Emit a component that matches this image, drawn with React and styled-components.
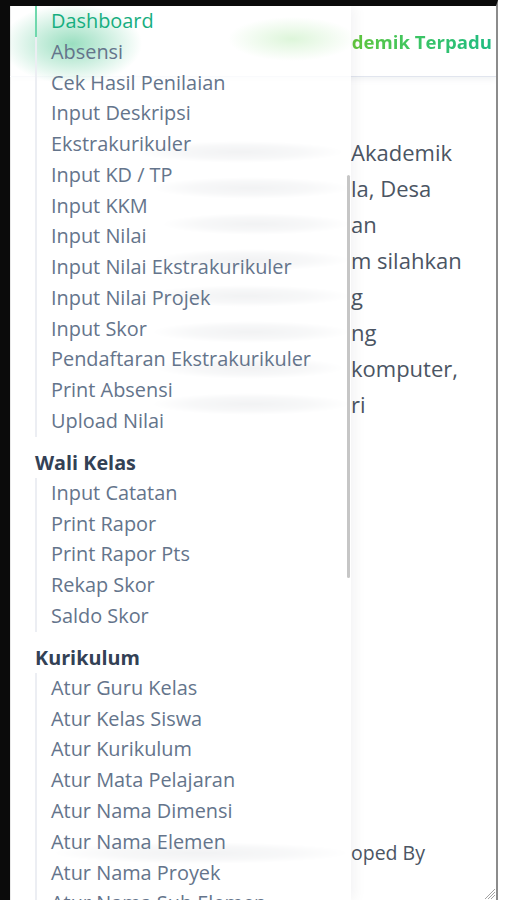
import styled, { createGlobalStyle } from 'styled-components';

const GlobalStyle = createGlobalStyle`
  html, body {
    margin: 0;
    padding: 0;
    background: #fff;
  }
  body {
    font-family: "Open Sans", "Noto Sans", sans-serif;
  }
`;

const Frame = styled.div`
  width: 506px;
  height: 900px;
  box-sizing: border-box;
  padding-right: 8px;
  background: #fff;
  overflow: hidden;
`;

const Device = styled.div`
  position: relative;
  height: 100%;
  box-sizing: border-box;
  border-top: 6px solid #0b0b0b;
  border-left: 10px solid #0b0b0b;
  border-right: 2px solid #8c8c8c;
  box-shadow: inset 1px 0 0 #8f8f8f;
  background: #fff;
  overflow: hidden;
`;

const Page = styled.div`
  display: flex;
  flex-direction: column;
  height: 100%;
`;

const Header = styled.header`
  height: 70px;
  flex: 0 0 70px;
  display: flex;
  align-items: center;
  justify-content: flex-end;
  padding: 0 4px 0 40px;
  border-bottom: 1px solid #e1e5ee;
  box-shadow: 0 2px 6px rgba(100, 116, 139, 0.1);
`;

const Title = styled.h1`
  margin: 0;
  font-size: 18.6px;
  font-weight: 700;
  white-space: nowrap;
  background: linear-gradient(90deg, #62c63c 0%, #3cc563 45%, #1fbb82 100%);
  -webkit-background-clip: text;
  background-clip: text;
  color: transparent;
`;

const Content = styled.main`
  padding: 57px 0 0 24px;
`;

const Line = styled.div`
  display: flex;
  align-items: center;
  font-size: ${({ $small }) => ($small ? '19.5px' : '22px')};
  line-height: 36px;
  color: #4b5563;
  white-space: nowrap;
`;

/* the part of each line covered by the drawer: only a blurred smear of it shows */
const Lead = styled.span`
  flex: 0 0 317px;
  display: flex;
  justify-content: flex-end;
  padding-right: ${({ $gap }) => ($gap ? '6px' : '0')};
  box-sizing: border-box;
`;

const Smudge = styled.span`
  height: 22px;
  background: radial-gradient(closest-side, rgba(90, 100, 115, 0.42), rgba(90, 100, 115, 0.24) 60%, rgba(90, 100, 115, 0));
`;

const Footer = styled.footer`
  margin-top: auto;
  padding: 0 0 29px 24px;
`;

const Sidebar = styled.aside`
  position: absolute;
  top: 0;
  left: 0;
  bottom: 0;
  width: 341px;
  box-sizing: border-box;
  padding-left: 25px;
  background:
    radial-gradient(70px 40px at 62px 38px, rgba(70, 196, 140, 0.55), rgba(70, 196, 140, 0.25) 55%, rgba(70, 196, 140, 0)),
    radial-gradient(64px 22px at 282px 33px, rgba(150, 226, 140, 0.32), rgba(150, 226, 140, 0)),
    rgba(255, 255, 255, 0.8);
  box-shadow: 4px 0 12px rgba(15, 23, 42, 0.05);
  overflow: hidden;
`;

const ScrollThumb = styled.div`
  position: absolute;
  top: 169px;
  right: 1px;
  width: 3px;
  height: 403px;
  border-radius: 2px;
  background: #c6c6c6;
`;

const NavGroup = styled.ul`
  margin: 0;
  padding: 0;
  list-style: none;
  border-left: 2px solid #eceef3;
`;

const NavItem = styled.li`
  padding-left: 14px;
  font-size: 19.9px;
  font-weight: 500;
  line-height: 30.77px;
  white-space: nowrap;
  color: ${({ $active }) => ($active ? '#16ae80' : '#64748b')};
  ${({ $active }) =>
    $active &&
    `
    margin-left: -2px;
    border-left: 2px solid #6fd8ad;
  `}
`;

const SectionTitle = styled.div`
  padding: 12px 0 1.2px;
  font-size: 19.8px;
  font-weight: 700;
  line-height: 28px;
  color: #334155;
`;

const Grip = styled.svg`
  position: absolute;
  right: 0;
  bottom: 0;
`;

const lines = [
  [210, 'Akademik', true],
  [200, 'la, Desa', false],
  [190, 'an', false],
  [200, 'm silahkan', false],
  [210, 'g', false],
  [200, 'ng', false],
  [190, 'komputer,', true],
  [200, 'ri', false],
];

const groups = [
  {
    items: [
      'Dashboard',
      'Absensi',
      'Cek Hasil Penilaian',
      'Input Deskripsi',
      'Ekstrakurikuler',
      'Input KD / TP',
      'Input KKM',
      'Input Nilai',
      'Input Nilai Ekstrakurikuler',
      'Input Nilai Projek',
      'Input Skor',
      'Pendaftaran Ekstrakurikuler',
      'Print Absensi',
      'Upload Nilai',
    ],
  },
  {
    title: 'Wali Kelas',
    items: ['Input Catatan', 'Print Rapor', 'Print Rapor Pts', 'Rekap Skor', 'Saldo Skor'],
  },
  {
    title: 'Kurikulum',
    items: [
      'Atur Guru Kelas',
      'Atur Kelas Siswa',
      'Atur Kurikulum',
      'Atur Mata Pelajaran',
      'Atur Nama Dimensi',
      'Atur Nama Elemen',
      'Atur Nama Proyek',
      'Atur Nama Sub Elemen',
    ],
  },
];

export default function App() {
  return (
    <Frame>
      <GlobalStyle />
      <Device>
        <Page>
          <Header>
            <Title>demik Terpadu</Title>
          </Header>
          <Content>
            {lines.map(([w, tail, gap]) => (
              <Line key={tail}>
                <Lead $gap={gap}>
                  <Smudge style={{ width: w }} />
                </Lead>
                {tail}
              </Line>
            ))}
          </Content>
          <Footer>
            <Line $small>
              <Lead>
                <Smudge style={{ width: 300 }} />
              </Lead>
              oped By
            </Line>
          </Footer>
        </Page>

        <Sidebar>
          {groups.map((group, i) => (
            <div key={i}>
              {group.title && <SectionTitle>{group.title}</SectionTitle>}
              <NavGroup>
                {group.items.map((item) => (
                  <NavItem key={item} $active={item === 'Dashboard'}>
                    {item}
                  </NavItem>
                ))}
              </NavGroup>
            </div>
          ))}
          <ScrollThumb />
        </Sidebar>

        <Grip width="14" height="14" viewBox="0 0 14 14">
          <path d="M13 3 L3 13 M13 6 L6 13 M13 9 L9 13" stroke="#a3a3a3" strokeWidth="1" />
        </Grip>
      </Device>
    </Frame>
  );
}
